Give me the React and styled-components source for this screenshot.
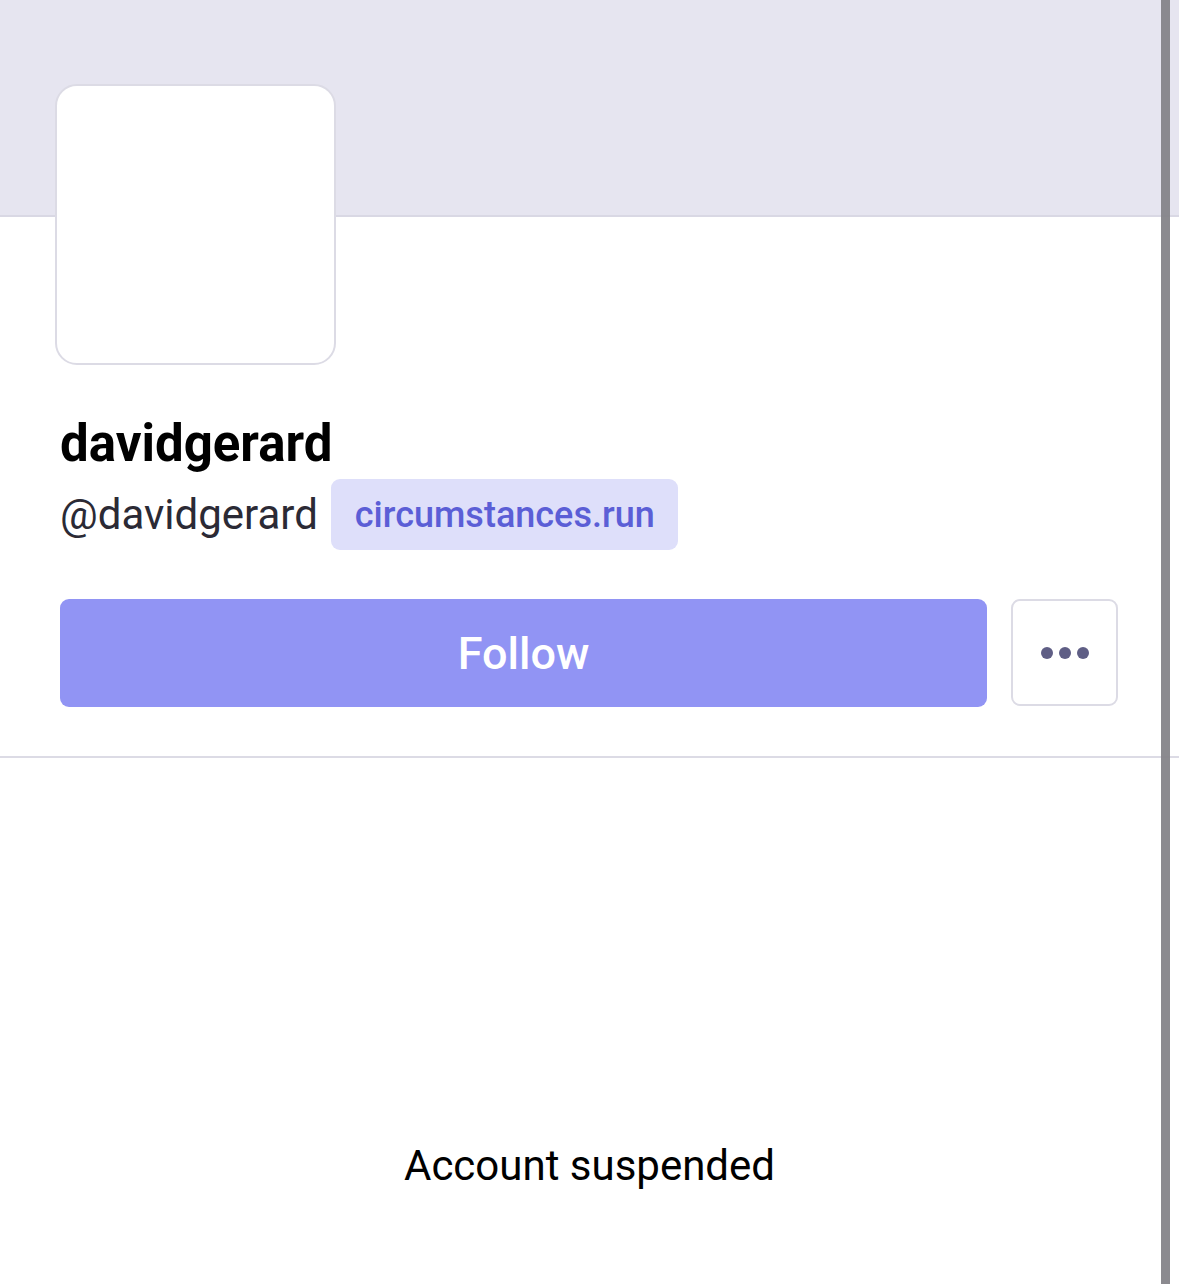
import styled, { createGlobalStyle } from "styled-components";

const GlobalStyle = createGlobalStyle`
  html, body {
    margin: 0;
    padding: 0;
    background: #ffffff;
    font-family: Roboto, "Noto Sans", "Liberation Sans", sans-serif;
  }
`;

const Page = styled.div`
  position: relative;
  width: 1179px;
  height: 1284px;
  overflow: hidden;
  background: #ffffff;
`;

const Banner = styled.div`
  height: 215px;
  background: #e6e5f0;
  border-bottom: 2px solid #d9d8e4;
`;

const Header = styled.div`
  padding: 0 60px;
  display: flex;
  flex-direction: column;
`;

const Avatar = styled.div`
  width: 277px;
  height: 277px;
  margin: -133px 0 0 -5px;
  background: #ffffff;
  border: 2px solid #dcdbe5;
  border-radius: 22px;
`;

const Name = styled.h1`
  margin: 47px 0 0;
  font-size: 51px;
  font-weight: 700;
  line-height: 64px;
  color: #000000;
`;

const HandleRow = styled.div`
  display: flex;
  align-items: center;
  gap: 13px;
  margin-top: 3px;
`;

const Handle = styled.span`
  font-size: 42px;
  color: #2b2a35;
`;

const Domain = styled.span`
  display: inline-flex;
  align-items: center;
  height: 71px;
  padding: 0 23px 0 24px;
  border-radius: 9px;
  background: #dedffa;
  color: #5b5ed6;
  font-size: 36px;
  font-weight: 500;
`;

const Actions = styled.div`
  display: flex;
  gap: 24px;
  margin-top: 49px;
  padding-right: 1px;
`;

const FollowButton = styled.button`
  flex: 1;
  height: 108px;
  border: none;
  border-radius: 9px;
  background: #9194f4;
  color: #ffffff;
  font-family: inherit;
  font-size: 45px;
  font-weight: 500;
`;

const MoreButton = styled.button`
  width: 107px;
  height: 107px;
  display: flex;
  align-items: center;
  justify-content: center;
  background: #ffffff;
  border: 2px solid #dcdbe5;
  border-radius: 9px;
  padding: 0;
`;

const Divider = styled.hr`
  margin: 49px 0 0;
  border: none;
  border-top: 2px solid #dcdbe5;
`;

const Notice = styled.p`
  margin: 383px 0 0;
  text-align: center;
  font-size: 42px;
  color: #000000;
`;

const ScrollBar = styled.div`
  position: absolute;
  top: 0;
  right: 9px;
  width: 9px;
  height: 100%;
  background: #858489;
  opacity: 0.95;
`;

const Dots = () => (
  <svg width="50" height="14" viewBox="0 0 50 14">
    <circle cx="7" cy="7" r="6" fill="#5f5e85" />
    <circle cx="25" cy="7" r="6" fill="#5f5e85" />
    <circle cx="43" cy="7" r="6" fill="#5f5e85" />
  </svg>
);

const App = () => {
  return (
    <Page>
      <GlobalStyle />
      <Banner />
      <Header>
        <Avatar />
        <Name>davidgerard</Name>
        <HandleRow>
          <Handle>@davidgerard</Handle>
          <Domain>circumstances.run</Domain>
        </HandleRow>
        <Actions>
          <FollowButton>Follow</FollowButton>
          <MoreButton>
            <Dots />
          </MoreButton>
        </Actions>
      </Header>
      <Divider />
      <Notice>Account suspended</Notice>
      <ScrollBar />
    </Page>
  );
};

export default App;
